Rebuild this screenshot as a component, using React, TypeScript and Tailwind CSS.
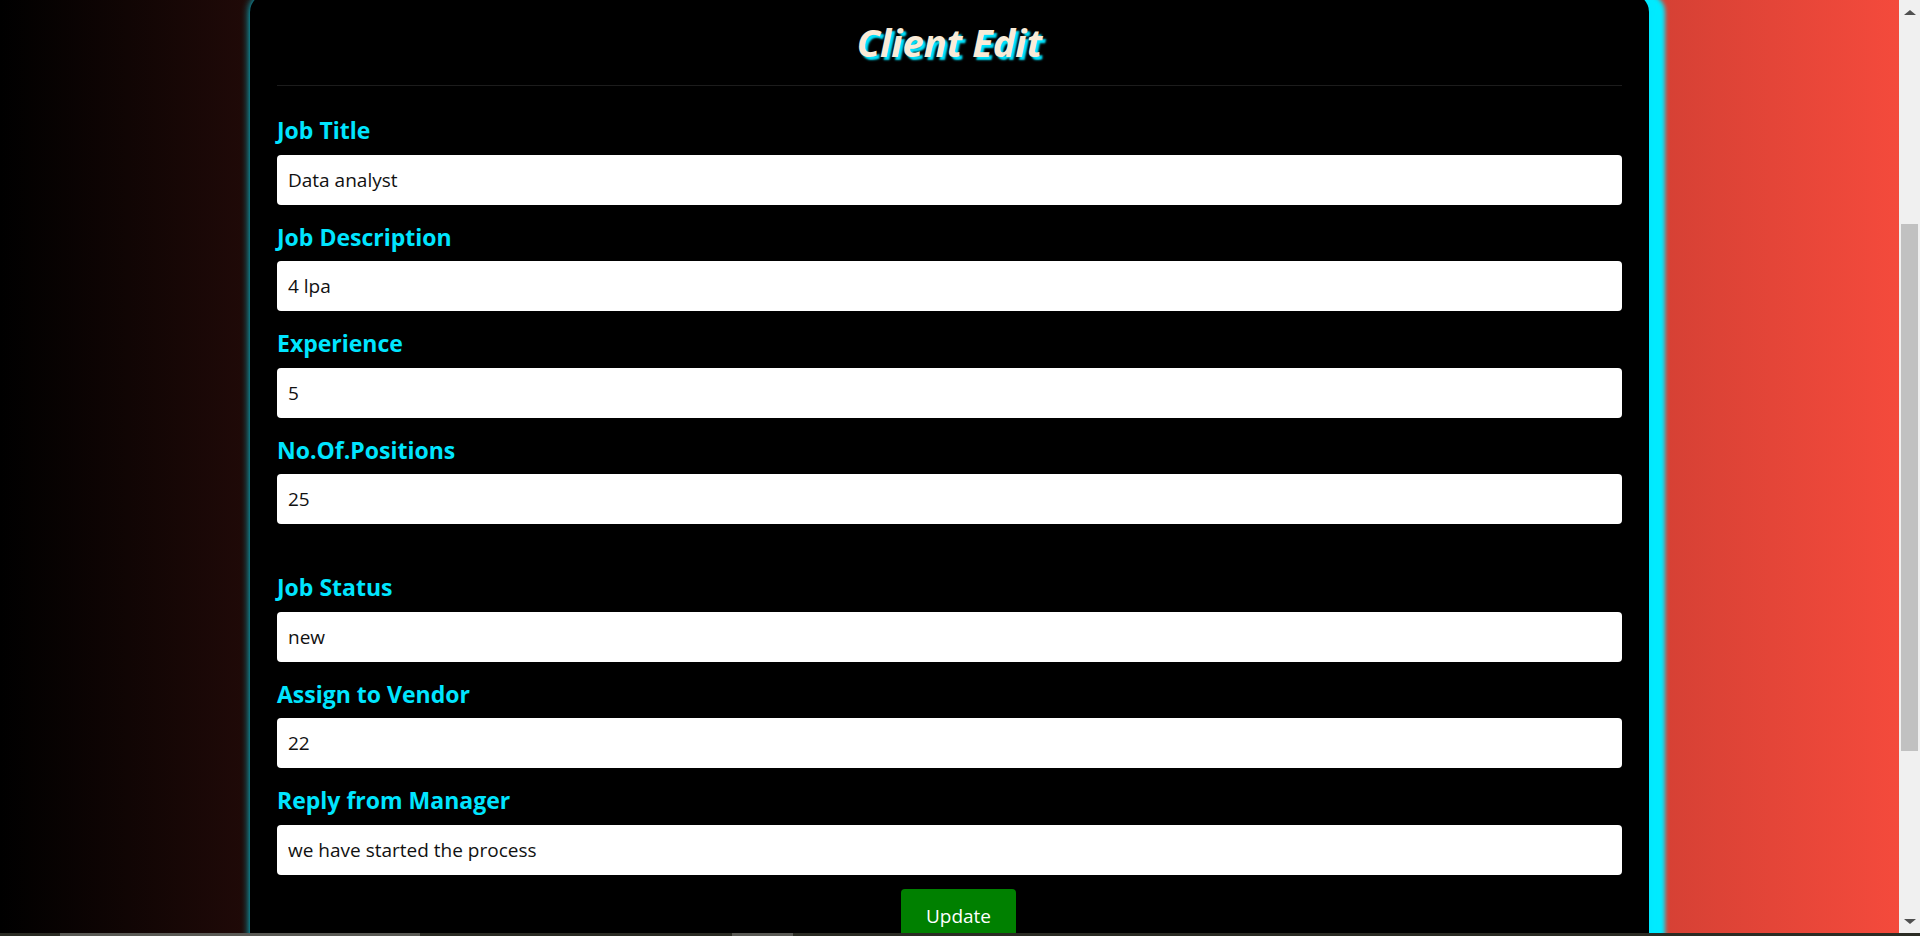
import React from "react";

const fields: { label: string; value: string; gapBefore?: boolean }[] = [
  { label: "Job Title", value: "Data analyst" },
  { label: "Job Description", value: "4 lpa" },
  { label: "Experience", value: "5" },
  { label: "No.Of.Positions", value: "25" },
  { label: "Job Status", value: "new", gapBefore: true },
  { label: "Assign to Vendor", value: "22" },
  { label: "Reply from Manager", value: "we have started the process" },
];

export default function App() {
  return (
    <div className="flex flex-col h-[936px] w-full overflow-hidden font-['Open_Sans',sans-serif]">
      <div className="flex flex-1 min-h-0">
        <div className="flex-1 min-w-0 h-full overflow-hidden bg-[linear-gradient(to_right,#000000,#f44a3c)]">
          <div className="w-[1399px] mx-auto -mt-[6px] bg-black rounded-[18px] px-[27px] shadow-[0_0_8px_#00e5ff,16px_0_4px_#00ebff] h-[960px]">
            <div className="pt-[26px] pb-[21px] border-b border-[#1c1c1c] text-center">
              <h1 className="text-[38px] leading-[44px] font-bold italic text-[#faebd7] [text-shadow:3px_3px_2px_#00e5ff]">
                Client Edit
              </h1>
            </div>
            <form className="pt-[12px] flex flex-col">
              {fields.map((f) => (
                <div key={f.label} className="flex flex-col">
                  {f.gapBefore && <div className="h-[31px]" />}
                  <label className="mt-[14px] mb-[6.5px] text-[23px] leading-[36px] font-bold text-[#00e5ff]">
                    {f.label}
                  </label>
                  <input
                    readOnly
                    value={f.value}
                    className="h-[50px] w-full bg-white rounded-[4px] px-[11px] text-[19px] text-[#111] outline-none"
                  />
                </div>
              ))}
              <div className="flex justify-center mt-[14px]">
                <button
                  type="button"
                  className="ml-[18px] bg-[#008000] text-white text-[19px] leading-[30px] px-[25px] py-[12px] rounded-[4px]"
                >
                  Update
                </button>
              </div>
            </form>
          </div>
        </div>
        <div className="w-[21px] h-full bg-[#f0f0f0] flex flex-col items-center">
          <div className="h-[24px] flex items-center justify-center">
            <div className="w-0 h-0 border-l-[6px] border-r-[6px] border-b-[5px] border-l-transparent border-r-transparent border-b-[#505050]" />
          </div>
          <div className="h-[200px]" />
          <div className="w-[17px] h-[527px] bg-[#c1c1c1]" />
          <div className="flex-1" />
          <div className="h-[24px] flex items-center justify-center">
            <div className="w-0 h-0 border-l-[6px] border-r-[6px] border-t-[5px] border-l-transparent border-r-transparent border-t-[#505050]" />
          </div>
        </div>
      </div>
      <div className="h-[3px] bg-[#2b2c24] flex">
        <div className="w-[60px]" />
        <div className="w-[360px] bg-[#5a5a55]" />
        <div className="w-[312px]" />
        <div className="w-[61px] bg-[#5a5a55]" />
      </div>
    </div>
  );
}
